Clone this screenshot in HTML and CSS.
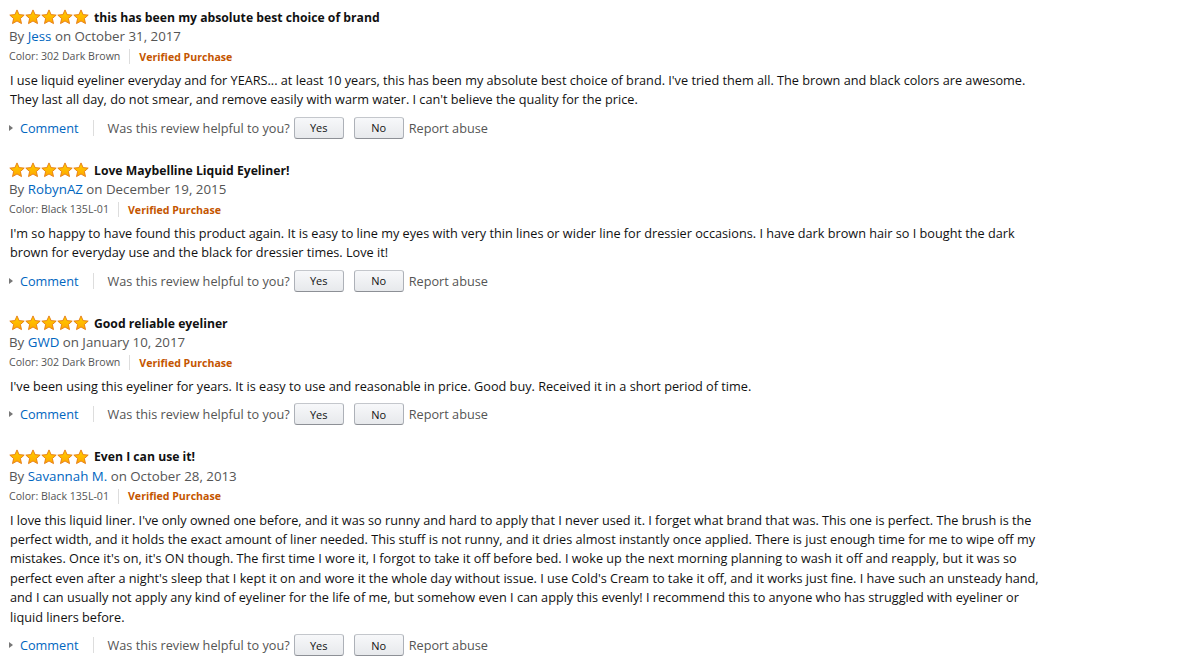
FILE: index.html
```html
<!DOCTYPE html>
<html>
<head>
<meta charset="utf-8">
<link rel="stylesheet" href="styles.css">
</head>
<body>
<svg width="0" height="0" class="defs">
  <defs>
    <linearGradient id="sg" x1="0" y1="0" x2="0" y2="1">
      <stop offset="0" stop-color="#ffce00"/>
      <stop offset="1" stop-color="#ffa700"/>
    </linearGradient>
    <symbol id="star" viewBox="0 0 16 16">
      <polygon points="8,0.9 10.1,5.6 15.2,6.1 11.4,9.5 12.5,14.6 8,12 3.5,14.6 4.6,9.5 0.8,6.1 5.9,5.6" fill="url(#sg)" stroke="#e47911" stroke-width="0.9" stroke-linejoin="round"/>
    </symbol>
  </defs>
</svg>
<div class="reviews">

  <div class="review">
    <div class="title-row">
      <span class="stars"><svg><use href="#star"/></svg><svg><use href="#star"/></svg><svg><use href="#star"/></svg><svg><use href="#star"/></svg><svg><use href="#star"/></svg></span>
      <span class="title">this has been my absolute best choice of brand</span>
    </div>
    <div class="byline">By <a class="link author">Jess</a> on October 31, 2017</div>
    <div class="meta"><span class="color">Color: 302 Dark Brown</span><span class="verified">Verified Purchase</span></div>
    <p class="body">I use liquid eyeliner everyday and for YEARS... at least 10 years, this has been my absolute best choice of brand. I've tried them all. The brown and black colors are awesome. They last all day, do not smear, and remove easily with warm water. I can't believe the quality for the price.</p>
    <div class="actions">
      <a class="link comment"><span class="tri"></span>Comment</a>
      <span class="helpful">Was this review helpful to you?</span>
      <button class="btn">Yes</button>
      <button class="btn">No</button>
      <span class="report">Report abuse</span>
    </div>
  </div>

  <div class="review">
    <div class="title-row">
      <span class="stars"><svg><use href="#star"/></svg><svg><use href="#star"/></svg><svg><use href="#star"/></svg><svg><use href="#star"/></svg><svg><use href="#star"/></svg></span>
      <span class="title">Love Maybelline Liquid Eyeliner!</span>
    </div>
    <div class="byline">By <a class="link author">RobynAZ</a> on December 19, 2015</div>
    <div class="meta"><span class="color">Color: Black 135L-01</span><span class="verified">Verified Purchase</span></div>
    <p class="body">I'm so happy to have found this product again. It is easy to line my eyes with very thin lines or wider line for dressier occasions. I have dark brown hair so I bought the dark brown for everyday use and the black for dressier times. Love it!</p>
    <div class="actions">
      <a class="link comment"><span class="tri"></span>Comment</a>
      <span class="helpful">Was this review helpful to you?</span>
      <button class="btn">Yes</button>
      <button class="btn">No</button>
      <span class="report">Report abuse</span>
    </div>
  </div>

  <div class="review">
    <div class="title-row">
      <span class="stars"><svg><use href="#star"/></svg><svg><use href="#star"/></svg><svg><use href="#star"/></svg><svg><use href="#star"/></svg><svg><use href="#star"/></svg></span>
      <span class="title">Good reliable eyeliner</span>
    </div>
    <div class="byline">By <a class="link author">GWD</a> on January 10, 2017</div>
    <div class="meta"><span class="color">Color: 302 Dark Brown</span><span class="verified">Verified Purchase</span></div>
    <p class="body">I've been using this eyeliner for years. It is easy to use and reasonable in price. Good buy. Received it in a short period of time.</p>
    <div class="actions">
      <a class="link comment"><span class="tri"></span>Comment</a>
      <span class="helpful">Was this review helpful to you?</span>
      <button class="btn">Yes</button>
      <button class="btn">No</button>
      <span class="report">Report abuse</span>
    </div>
  </div>

  <div class="review">
    <div class="title-row">
      <span class="stars"><svg><use href="#star"/></svg><svg><use href="#star"/></svg><svg><use href="#star"/></svg><svg><use href="#star"/></svg><svg><use href="#star"/></svg></span>
      <span class="title">Even I can use it!</span>
    </div>
    <div class="byline">By <a class="link author">Savannah M.</a> on October 28, 2013</div>
    <div class="meta"><span class="color">Color: Black 135L-01</span><span class="verified">Verified Purchase</span></div>
    <p class="body">I love this liquid liner. I've only owned one before, and it was so runny and hard to apply that I never used it. I forget what brand that was. This one is perfect. The brush is the perfect width, and it holds the exact amount of liner needed. This stuff is not runny, and it dries almost instantly once applied. There is just enough time for me to wipe off my mistakes. Once it's on, it's ON though. The first time I wore it, I forgot to take it off before bed. I woke up the next morning planning to wash it off and reapply, but it was so perfect even after a night's sleep that I kept it on and wore it the whole day without issue. I use Cold's Cream to take it off, and it works just fine. I have such an unsteady hand, and I can usually not apply any kind of eyeliner for the life of me, but somehow even I can apply this evenly! I recommend this to anyone who has struggled with eyeliner or liquid liners before.</p>
    <div class="actions">
      <a class="link comment"><span class="tri"></span>Comment</a>
      <span class="helpful">Was this review helpful to you?</span>
      <button class="btn">Yes</button>
      <button class="btn">No</button>
      <span class="report">Report abuse</span>
    </div>
  </div>

</div>
</body>
</html>
```

FILE: styles.css
```css
html, body {
  margin: 0;
  padding: 0;
  background: #ffffff;
}
body {
  font-family: "Open Sans", "Noto Sans", sans-serif;
  font-size: 12.7px;
  color: #111111;
}
.defs {
  position: absolute;
  width: 0;
  height: 0;
}
.reviews {
  padding: 8px 0 0 9px;
  width: 1035px;
}
.review {
  margin-bottom: 21.2px;
}
.title-row {
  display: flex;
  align-items: center;
  height: 18px;
}
.stars {
  display: flex;
  margin-right: 5px;
}
.stars svg {
  width: 16px;
  height: 16px;
  display: block;
}
.title {
  font-weight: 700;
  font-size: 12.2px;
  color: #111;
}
.byline {
  margin-top: 1px;
  height: 19px;
  line-height: 19px;
  color: #555555;
  font-size: 13.3px;
}
.link {
  color: #0066c0;
  text-decoration: none;
}
.meta {
  display: flex;
  align-items: center;
  height: 21px;
  font-size: 10.6px;
  color: #555555;
}
.color {
  padding-right: 9px;
  border-right: 1px solid #dddddd;
  line-height: 15px;
}
.verified {
  padding-left: 9px;
  font-weight: 700;
  color: #c45500;
}
.body {
  margin: 4px 0 0 1px;
  line-height: 19.4px;
}
.actions {
  display: flex;
  align-items: center;
  height: 24px;
  margin-top: 6px;
  color: #555555;
}
.comment {
  display: flex;
  align-items: center;
  padding-right: 14px;
  border-right: 1px solid #dddddd;
  line-height: 16px;
  margin-right: 14px;
}
.tri {
  width: 0;
  height: 0;
  border-top: 3.5px solid transparent;
  border-bottom: 3.5px solid transparent;
  border-left: 4px solid #777;
  margin-right: 7px;
}
.helpful {
  margin-right: 4px;
}
.btn {
  width: 50px;
  height: 22px;
  margin: 0 10px 0 0;
  padding: 0;
  font-family: inherit;
  font-size: 11px;
  color: #111;
  border: 1px solid #adb1b8;
  border-top-color: #c4c7cc;
  border-bottom-color: #8d9096;
  border-radius: 3px;
  background: linear-gradient(#f7f8fa, #e7e9ec);
}
.btn + .btn {
  margin-right: 5px;
}
.report {
  color: #555555;
}
```
